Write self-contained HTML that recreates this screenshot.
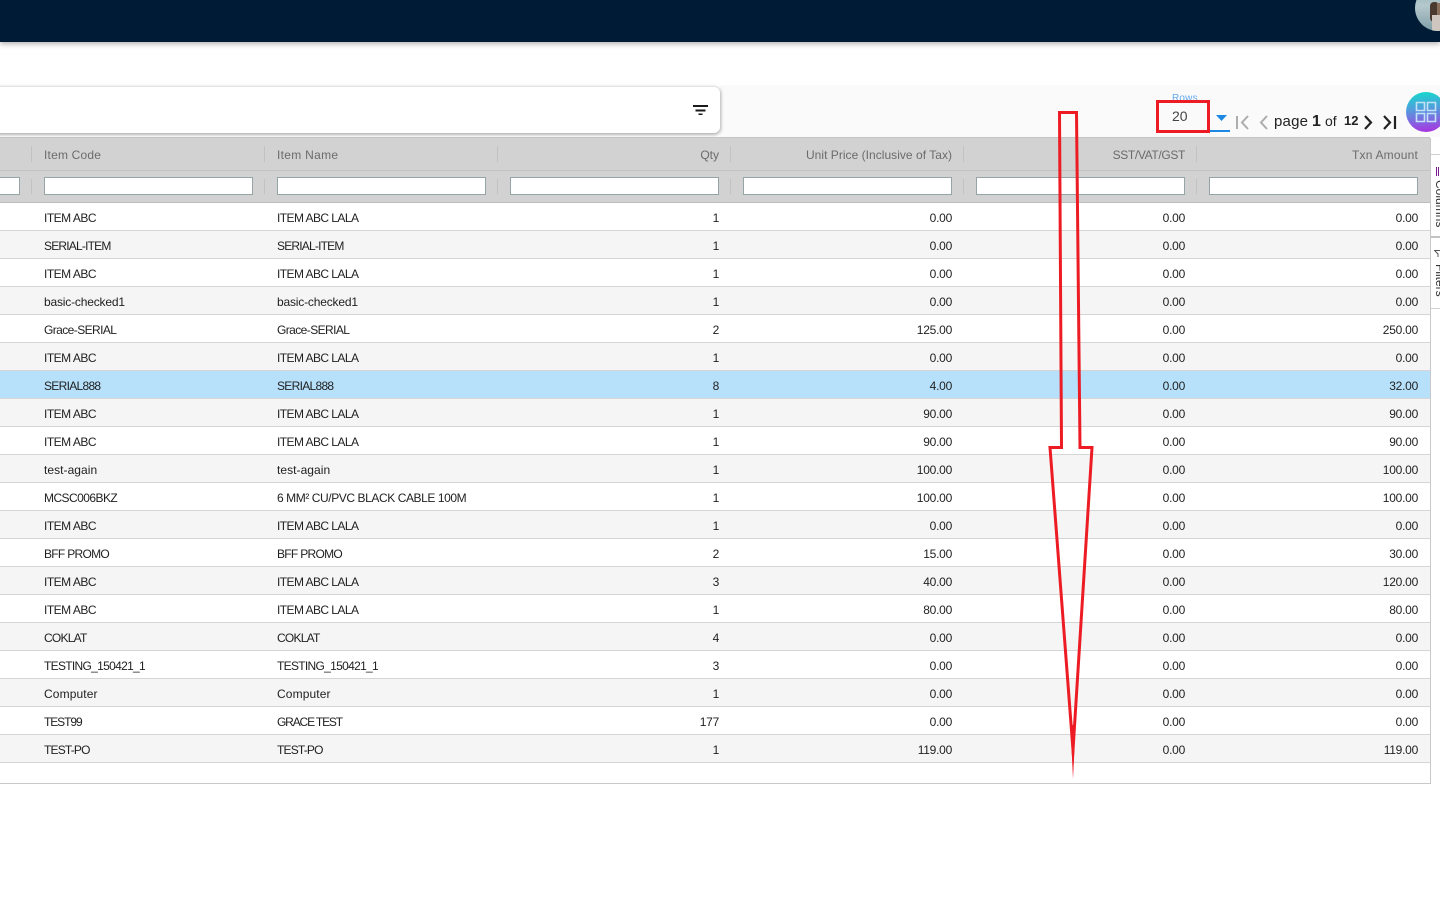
<!DOCTYPE html>
<html><head><meta charset="utf-8"><style>
html,body{margin:0;padding:0;width:1440px;height:900px;overflow:hidden;background:#fff}
body{position:relative;font-family:"Liberation Sans",sans-serif;font-size:12px;color:#1f1f1f}
.a{position:absolute}
#top{left:0;top:0;width:1440px;height:42px;background:#001b36;box-shadow:0 2px 5px rgba(0,0,0,.3);overflow:hidden}
#tool{left:720px;top:85px;width:720px;height:52px;background:#fafafa}
#card{left:-10px;top:87px;width:730px;height:46px;background:#fff;border-radius:6px;box-shadow:0 1px 3px 1px rgba(0,0,0,.3)}
#head{left:0;top:137px;width:1430px;height:66px;background:#d2d2d2;border-top:1px solid #c4c4c4;box-sizing:border-box}
#line{left:0;top:170px;width:1430px;height:1px;background:#c2c2c2}
#line2{left:0;top:202px;width:1430px;height:1px;background:#bdbdbd}
.h,.f,.t{position:absolute;width:209px;white-space:nowrap}
.h{top:148px;color:#6b6b6b;line-height:14px}
.sep{position:absolute;width:1px;background:#c2c2c2}
.f{top:177px;height:18px;box-sizing:border-box;background:#fff;border:1px solid #95a5a6}
.r{position:absolute;left:0;width:1430px;height:28px;box-sizing:border-box;border-bottom:1px solid #d5d5d5;background:#fff}
.r.e{background:#f5f5f5}.r.s{background:#b7e1fb}
.r span{position:absolute;top:8px;line-height:14px;white-space:nowrap;letter-spacing:-.25px}
.r .c1,.r .c2{letter-spacing:var(--l)}
.c1{left:44px}.c2{left:277px}
.c3,.c4,.c5,.c6{text-align:right;width:209px}
.c3{left:510px}.c4{left:743px}.c5{left:976px}.c6{left:1209px}
</style></head><body>
<div class="a" id="tool"></div>
<div class="a" id="top"><div class="a" style="left:1415px;top:-15px;width:46px;height:46px;border-radius:50%;background:linear-gradient(#8fb0b8 0%,#b4c8cc 45%,#7f9ea8 100%);overflow:hidden"><div class="a" style="left:0;top:0;width:46px;height:15px;background:#6f8a92"></div><div class="a" style="left:15px;top:17px;width:9px;height:20px;background:#4a3a30;border-radius:4px"></div><div class="a" style="left:17px;top:30px;width:10px;height:16px;background:#cfc6c0"></div><div class="a" style="left:22px;top:18px;width:5px;height:12px;background:#8a6f5c"></div></div></div>
<div class="a" id="card"></div>
<svg class="a" style="left:693px;top:104px" width="15" height="11"><path d="M0 1h15v2H0zM2.500 5.500h10v2h-10zM5.500 9.500h4v1.500h-4z" fill="#1a1a1a"/></svg>

<div class="a" id="head"></div><div class="a" id="line"></div><div class="a" id="line2"></div>
<div class="h" style="left:44px;letter-spacing:.2px">Item Code</div>
<div class="h" style="left:277px;letter-spacing:.3px">Item Name</div>
<div class="h" style="left:510px;text-align:right">Qty</div>
<div class="h" style="left:743px;text-align:right;letter-spacing:.03px">Unit Price (Inclusive of Tax)</div>
<div class="h" style="left:976px;text-align:right;letter-spacing:-.35px">SST/VAT/GST</div>
<div class="h" style="left:1209px;text-align:right;letter-spacing:.2px">Txn Amount</div>
<i class="sep" style="left:31px;top:146px;height:16px"></i><i class="sep" style="left:264px;top:146px;height:16px"></i><i class="sep" style="left:497px;top:146px;height:16px"></i><i class="sep" style="left:730px;top:146px;height:16px"></i><i class="sep" style="left:963px;top:146px;height:16px"></i><i class="sep" style="left:1196px;top:146px;height:16px"></i>
<i class="sep" style="left:31px;top:179px;height:15px"></i><i class="sep" style="left:264px;top:179px;height:15px"></i><i class="sep" style="left:497px;top:179px;height:15px"></i><i class="sep" style="left:730px;top:179px;height:15px"></i><i class="sep" style="left:963px;top:179px;height:15px"></i><i class="sep" style="left:1196px;top:179px;height:15px"></i>
<div class="f" style="left:-10px;width:30px"></div><div class="f" style="left:44px"></div><div class="f" style="left:277px"></div><div class="f" style="left:510px"></div><div class="f" style="left:743px"></div><div class="f" style="left:976px"></div><div class="f" style="left:1209px"></div>

<div class="r" style="top:203px"><span class="c1" style="--l:-.5px">ITEM ABC</span><span class="c2" style="--l:-.56px">ITEM ABC LALA</span><span class="c3">1</span><span class="c4">0.00</span><span class="c5">0.00</span><span class="c6">0.00</span></div>
<div class="r e" style="top:231px"><span class="c1" style="--l:-.8px">SERIAL-ITEM</span><span class="c2" style="--l:-.8px">SERIAL-ITEM</span><span class="c3">1</span><span class="c4">0.00</span><span class="c5">0.00</span><span class="c6">0.00</span></div>
<div class="r" style="top:259px"><span class="c1" style="--l:-.5px">ITEM ABC</span><span class="c2" style="--l:-.56px">ITEM ABC LALA</span><span class="c3">1</span><span class="c4">0.00</span><span class="c5">0.00</span><span class="c6">0.00</span></div>
<div class="r e" style="top:287px"><span class="c1" style="--l:-.18px">basic-checked1</span><span class="c2" style="--l:-.18px">basic-checked1</span><span class="c3">1</span><span class="c4">0.00</span><span class="c5">0.00</span><span class="c6">0.00</span></div>
<div class="r" style="top:315px"><span class="c1" style="--l:-.58px">Grace-SERIAL</span><span class="c2" style="--l:-.58px">Grace-SERIAL</span><span class="c3">2</span><span class="c4">125.00</span><span class="c5">0.00</span><span class="c6">250.00</span></div>
<div class="r e" style="top:343px"><span class="c1" style="--l:-.5px">ITEM ABC</span><span class="c2" style="--l:-.56px">ITEM ABC LALA</span><span class="c3">1</span><span class="c4">0.00</span><span class="c5">0.00</span><span class="c6">0.00</span></div>
<div class="r s" style="top:371px"><span class="c1" style="--l:-.7px">SERIAL888</span><span class="c2" style="--l:-.7px">SERIAL888</span><span class="c3">8</span><span class="c4">4.00</span><span class="c5">0.00</span><span class="c6">32.00</span></div>
<div class="r e" style="top:399px"><span class="c1" style="--l:-.5px">ITEM ABC</span><span class="c2" style="--l:-.56px">ITEM ABC LALA</span><span class="c3">1</span><span class="c4">90.00</span><span class="c5">0.00</span><span class="c6">90.00</span></div>
<div class="r" style="top:427px"><span class="c1" style="--l:-.5px">ITEM ABC</span><span class="c2" style="--l:-.56px">ITEM ABC LALA</span><span class="c3">1</span><span class="c4">90.00</span><span class="c5">0.00</span><span class="c6">90.00</span></div>
<div class="r e" style="top:455px"><span class="c1" style="--l:.05px">test-again</span><span class="c2" style="--l:.05px">test-again</span><span class="c3">1</span><span class="c4">100.00</span><span class="c5">0.00</span><span class="c6">100.00</span></div>
<div class="r" style="top:483px"><span class="c1" style="--l:-.55px">MCSC006BKZ</span><span class="c2" style="--l:-.42px">6 MM² CU/PVC BLACK CABLE 100M</span><span class="c3">1</span><span class="c4">100.00</span><span class="c5">0.00</span><span class="c6">100.00</span></div>
<div class="r e" style="top:511px"><span class="c1" style="--l:-.5px">ITEM ABC</span><span class="c2" style="--l:-.56px">ITEM ABC LALA</span><span class="c3">1</span><span class="c4">0.00</span><span class="c5">0.00</span><span class="c6">0.00</span></div>
<div class="r" style="top:539px"><span class="c1" style="--l:-.7px">BFF PROMO</span><span class="c2" style="--l:-.7px">BFF PROMO</span><span class="c3">2</span><span class="c4">15.00</span><span class="c5">0.00</span><span class="c6">30.00</span></div>
<div class="r e" style="top:567px"><span class="c1" style="--l:-.5px">ITEM ABC</span><span class="c2" style="--l:-.56px">ITEM ABC LALA</span><span class="c3">3</span><span class="c4">40.00</span><span class="c5">0.00</span><span class="c6">120.00</span></div>
<div class="r" style="top:595px"><span class="c1" style="--l:-.5px">ITEM ABC</span><span class="c2" style="--l:-.56px">ITEM ABC LALA</span><span class="c3">1</span><span class="c4">80.00</span><span class="c5">0.00</span><span class="c6">80.00</span></div>
<div class="r e" style="top:623px"><span class="c1" style="--l:-.75px">COKLAT</span><span class="c2" style="--l:-.75px">COKLAT</span><span class="c3">4</span><span class="c4">0.00</span><span class="c5">0.00</span><span class="c6">0.00</span></div>
<div class="r" style="top:651px"><span class="c1" style="--l:-.69px">TESTING_150421_1</span><span class="c2" style="--l:-.69px">TESTING_150421_1</span><span class="c3">3</span><span class="c4">0.00</span><span class="c5">0.00</span><span class="c6">0.00</span></div>
<div class="r e" style="top:679px"><span class="c1" style="--l:.12px">Computer</span><span class="c2" style="--l:.12px">Computer</span><span class="c3">1</span><span class="c4">0.00</span><span class="c5">0.00</span><span class="c6">0.00</span></div>
<div class="r" style="top:707px"><span class="c1" style="--l:-1.08px">TEST99</span><span class="c2" style="--l:-1.15px">GRACE TEST</span><span class="c3">177</span><span class="c4">0.00</span><span class="c5">0.00</span><span class="c6">0.00</span></div>
<div class="r e" style="top:735px"><span class="c1" style="--l:-.82px">TEST-PO</span><span class="c2" style="--l:-.82px">TEST-PO</span><span class="c3">1</span><span class="c4">119.00</span><span class="c5">0.00</span><span class="c6">119.00</span></div>
<div class="a" style="left:0;top:783px;width:1440px;height:1px;background:#c9c9c9"></div>

<!-- sidebar -->
<div class="a" style="left:1430px;top:138px;width:10px;height:646px;background:#fff;border-left:1px solid #c9c9c9;box-sizing:border-box"></div>
<div class="a" style="left:1431px;top:154px;width:9px;height:1px;background:#d0d0d0"></div>
<div class="a" style="left:1431px;top:236px;width:9px;height:2px;background:#c4c4c4"></div>
<div class="a" style="left:1431px;top:308px;width:9px;height:1px;background:#d0d0d0"></div>
<div class="a" style="left:1436px;top:167px;width:1px;height:9px;background:#7a1a8c;box-shadow:2px 0 0 #7a1a8c"></div>
<div class="a" style="left:1434px;top:180px;font-size:12px;line-height:12px;writing-mode:vertical-rl;color:#333">Columns</div>
<svg class="a" style="left:1434px;top:250px" width="6" height="8"><path d="M0 .5h6M1 1l3 3v3" fill="none" stroke="#555"/></svg>
<div class="a" style="left:1434px;top:264px;font-size:12px;line-height:12px;writing-mode:vertical-rl;color:#333">Filters</div>

<!-- pagination -->
<div class="a" style="left:1172px;top:93px;font-size:10px;line-height:12px;color:#64a9ee;letter-spacing:.2px">Rows</div>
<div class="a" style="left:1172px;top:108px;font-size:14px;line-height:16px;color:#444">20</div>
<svg class="a" style="left:1216px;top:115px" width="11" height="6"><path d="M0 0h11L5.500 6z" fill="#1e88e5"/></svg>
<div class="a" style="left:1210px;top:130px;width:20px;height:2px;background:#1e88e5"></div>
<svg class="a" style="left:1234px;top:112px" width="166" height="20">
<path d="M3 4v13M14 4l-6 6.500 6 6.500M33 4l-6 6.500 6 6.500" fill="none" stroke="#adadad" stroke-width="2"/>
<path d="M131 4l6 6.500-6 6.500M150 4l6 6.500-6 6.500M161 4v13" fill="none" stroke="#222" stroke-width="2.200"/>
</svg>
<div class="a" style="left:1274px;top:113px;font-size:15px;line-height:18px;color:#222;letter-spacing:.2px">page</div>
<div class="a" style="left:1312px;top:113px;font-size:16px;line-height:18px;font-weight:700;color:#222">1</div>
<div class="a" style="left:1325px;top:112px;font-size:14px;line-height:18px;color:#222">of</div>
<div class="a" style="left:1344px;top:112px;font-size:13px;line-height:18px;font-weight:700;color:#222">12</div>
<div class="a" style="left:1406px;top:92px;width:40px;height:40px;border-radius:50%;background:linear-gradient(175deg,#12dccb 0%,#4fa0dc 40%,#7a70e0 65%,#ae2ee0 100%)"></div>
<svg class="a" style="left:1415px;top:101px" width="22" height="22"><path d="M1.500 1.500h8v8h-8zM12.500 1.500h8v8h-8zM1.500 12.500h8v8h-8zM12.500 12.500h8v8h-8z" fill="none" stroke="#c4e2f7" stroke-width="1.600"/></svg>

<!-- annotations -->
<svg class="a" style="left:0;top:0" width="1440" height="900">
<rect x="1157.500" y="101.500" width="51" height="30" fill="none" stroke="#ed1c24" stroke-width="3"/>
<polygon points="1059.500,112.500 1076.500,112.500 1080,447.500 1092,447.500 1073,750 1050,447.500 1061.500,447.500" fill="none" stroke="#ed1c24" stroke-width="3" stroke-miterlimit="40" stroke-linejoin="miter"/>
<polygon points="1070.500,725 1075.500,725 1073,779" fill="#ed1c24"/>
</svg>
</body></html>
